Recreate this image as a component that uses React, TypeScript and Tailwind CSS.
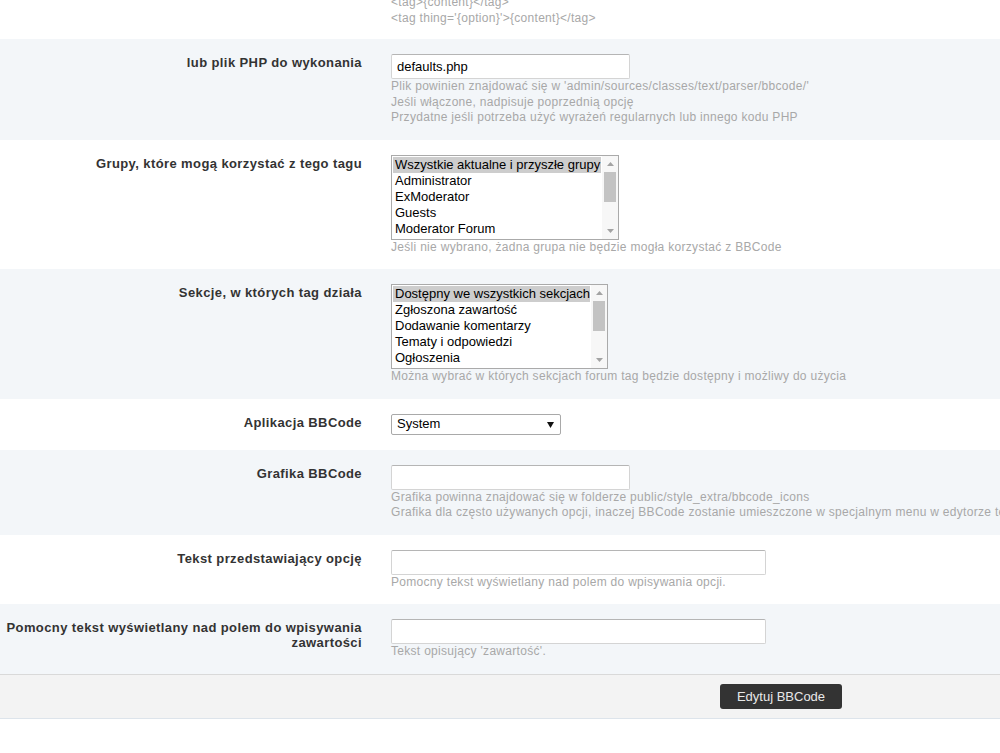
import React from "react";

const Help = ({ lines }: { lines: string[] }) => (
    <div className="text-[12px] leading-[15.5px] tracking-[0.3px] text-[#a8a8a8] whitespace-nowrap">
        {lines.map((l) => (
            <div key={l}>{l}</div>
        ))}
    </div>
);

const Row = ({
    label,
    alt,
    children,
    pb = "pb-[14px]",
}: {
    label: React.ReactNode;
    alt?: boolean;
    children: React.ReactNode;
    pb?: string;
}) => (
    <div className={`flex pt-[15px] ${pb} ${alt ? "bg-[#f3f6f9]" : "bg-white"}`}>
        <div className="w-[362px] shrink-0 pl-[2px] pt-[1px] text-right text-[13px] font-bold leading-[15px] tracking-[0.4px] text-[#333]">
            {label}
        </div>
        <div className="ml-[29px] min-w-0">{children}</div>
    </div>
);

const TextInput = ({ width, value = "" }: { width: string; value?: string }) => (
    <div
        className={`flex h-[25px] items-center rounded-[2px] border border-[#d4d4d4] border-t-[#b5b5b5] bg-white pl-[5px] text-[13px] text-black ${width}`}
    >
        {value}
    </div>
);

const Arrow = ({ down }: { down?: boolean }) => (
    <svg width="7" height="4" viewBox="0 0 7 4">
        <path d={down ? "M0 0H7L3.5 4Z" : "M0 4H7L3.5 0Z"} fill="#a3a3a3" />
    </svg>
);

const ListBox = ({ width, options }: { width: string; options: string[] }) => (
    <div className={`flex h-[85px] border border-[#aaaaaa] bg-white ${width}`}>
        <div className="min-w-0 flex-1 p-[1px] text-[13px] leading-[16px] text-black">
            {options.map((o, i) => (
                <div key={o} className={`whitespace-nowrap pl-[2px] ${i === 0 ? "bg-[#cdcdcd]" : ""}`}>
                    {o}
                </div>
            ))}
        </div>
        <div className="flex w-[16px] flex-col items-center bg-[#f7f7f7]">
            <div className="flex h-[16px] items-center">
                <Arrow />
            </div>
            <div className="h-[30px] w-[12px] bg-[#c3c3c3]" />
            <div className="flex-1" />
            <div className="flex h-[16px] items-center">
                <Arrow down />
            </div>
        </div>
    </div>
);

const App = () => {
    return (
        <div className="min-h-[753px] w-[1000px] overflow-hidden bg-white font-['Liberation_Sans',Arial,sans-serif]">
            <div className="flex h-[39px] items-end overflow-hidden bg-white pb-[13px] pl-[391px]">
                <Help
                    lines={[
                        "<tag>{content}</tag>",
                        "<tag thing='{option}'>{content}</tag>",
                    ]}
                />
            </div>

            <Row label="lub plik PHP do wykonania" alt>
                <TextInput width="w-[239px]" value="defaults.php" />
                <Help
                    lines={[
                        "Plik powinien znajdować się w 'admin/sources/classes/text/parser/bbcode/'",
                        "Jeśli włączone, nadpisuje poprzednią opcję",
                        "Przydatne jeśli potrzeba użyć wyrażeń regularnych lub innego kodu PHP",
                    ]}
                />
            </Row>

            <Row label="Grupy, które mogą korzystać z tego tagu">
                <ListBox
                    width="w-[228px]"
                    options={[
                        "Wszystkie aktualne i przyszłe grupy",
                        "Administrator",
                        "ExModerator",
                        "Guests",
                        "Moderator Forum",
                    ]}
                />
                <Help lines={["Jeśli nie wybrano, żadna grupa nie będzie mogła korzystać z BBCode"]} />
            </Row>

            <Row label="Sekcje, w których tag działa" alt>
                <ListBox
                    width="w-[217px]"
                    options={[
                        "Dostępny we wszystkich sekcjach",
                        "Zgłoszona zawartość",
                        "Dodawanie komentarzy",
                        "Tematy i odpowiedzi",
                        "Ogłoszenia",
                    ]}
                />
                <Help lines={["Można wybrać w których sekcjach forum tag będzie dostępny i możliwy do użycia"]} />
            </Row>

            <Row label="Aplikacja BBCode" pb="pb-[15px]">
                <div className="flex h-[21px] w-[170px] items-center justify-between rounded-[2px] border border-[#a9a9a9] bg-white pl-[5px] pr-[6px] text-[13px] text-black">
                    <span>System</span>
                    <svg width="7" height="7" viewBox="0 0 7 7">
                        <path d="M0 1H7L3.5 7Z" fill="#111" />
                    </svg>
                </div>
            </Row>

            <Row label="Grafika BBCode" alt>
                <TextInput width="w-[239px]" />
                <Help
                    lines={[
                        "Grafika powinna znajdować się w folderze public/style_extra/bbcode_icons",
                        "Grafika dla często używanych opcji, inaczej BBCode zostanie umieszczone w specjalnym menu w edytorze tekstu",
                    ]}
                />
            </Row>

            <Row label="Tekst przedstawiający opcję">
                <TextInput width="w-[375px]" />
                <Help lines={["Pomocny tekst wyświetlany nad polem do wpisywania opcji."]} />
            </Row>

            <Row label="Pomocny tekst wyświetlany nad polem do wpisywania zawartości" alt>
                <TextInput width="w-[375px]" />
                <Help lines={["Tekst opisujący 'zawartość'."]} />
            </Row>

            <div className="border-t border-b border-t-[#d9d9d9] border-b-[#dde4eb] bg-[#f3f3f3] pb-[9px] pl-[720px] pt-[9px]">
                <button className="h-[25px] w-[122px] rounded-[3px] bg-[#333] text-[13px] text-[#e8e8e8]">
                    Edytuj BBCode
                </button>
            </div>
        </div>
    );
};

export default App;
